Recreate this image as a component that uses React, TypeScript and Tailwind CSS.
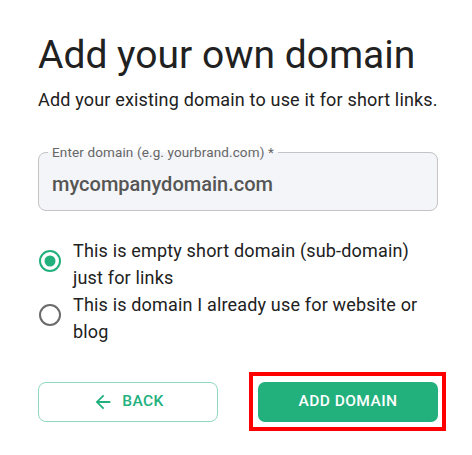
import {useState} from "react";

function RadioIcon({checked}: {checked: boolean}) {
    return (
        <svg width="24" height="24" viewBox="0 0 24 24" className="shrink-0 mb-[6px]">
            <circle cx="12" cy="12" r="10" fill="none" strokeWidth="2"
                    stroke={checked ? "#22b07d" : "#6b6b6b"}/>
            {checked && <circle cx="12" cy="12" r="5.5" fill="#22b07d"/>}
        </svg>
    );
}

function ArrowBack() {
    return (
        <svg width="22" height="22" viewBox="0 0 24 24" fill="currentColor" className="shrink-0">
            <path d="M20 11H7.83l5.59-5.59L12 4l-8 8 8 8 1.41-1.41L7.83 13H20v-2z"/>
        </svg>
    );
}

const options = [
    {id: "short", label: "This is empty short domain (sub-domain) just for links"},
    {id: "site", label: "This is domain I already use for website or blog"},
];

function App() {

    const [domain, setDomain] = useState("mycompanydomain.com")
    const [kind, setKind] = useState("short")

    return (
        <div className="min-h-screen bg-white pl-[38px] pr-[34px] pt-[32px] font-['Roboto',sans-serif] text-[#212121]">

            <h1 className="text-[39px] leading-[46px] font-normal">Add your own domain</h1>
            <p className="mt-[8px] text-[18px] leading-[27px] tracking-[0.17px]">Add your existing domain to use it for short links.</p>

            <fieldset className="mt-[31px] w-[400px] rounded-[8px] border border-[#c4c4c4] bg-[#f4f5f9] pl-[13px] pr-3 pb-[12px]">
                <legend className="-ml-1 px-1 text-[13.5px] leading-[16px] tracking-[0.13px] text-[#666]">
                    Enter domain (e.g. yourbrand.com) *
                </legend>
                <input type="text" value={domain}
                       onChange={e => setDomain(e.target.value)}
                       className="mt-[12px] w-full bg-transparent text-[20px] leading-[24px] font-medium text-[#555] outline-none"/>
            </fieldset>

            <div className="mt-[26px] w-[400px]">
                {options.map(o => (
                    <label key={o.id} className="flex items-center gap-[11px] cursor-pointer"
                           onClick={() => setKind(o.id)}>
                        <RadioIcon checked={kind === o.id}/>
                        <span className="text-[18px] leading-[27px] tracking-[0.17px]">{o.label}</span>
                    </label>
                ))}
            </div>

            <div className="mt-[37px] flex gap-[40px]">
                <button
                    className="flex h-[40px] w-[180px] items-center justify-center gap-[8px] rounded-[8px] border border-[#90d8bd] text-[15.5px] font-medium tracking-[0.46px] text-[#22b07d]">
                    <ArrowBack/>
                    BACK
                </button>
                <div className="relative">
                    <button
                        className="h-[40px] w-[180px] rounded-[7px] bg-[#22b07d] text-[15.5px] font-medium tracking-[0.46px] text-white">
                        ADD DOMAIN
                    </button>
                    <span className="absolute -left-[9px] -right-[8px] -top-[10px] -bottom-[9px] border-4 border-[#ff0000] pointer-events-none"/>
                </div>
            </div>
        </div>
    );
}

export default App;
